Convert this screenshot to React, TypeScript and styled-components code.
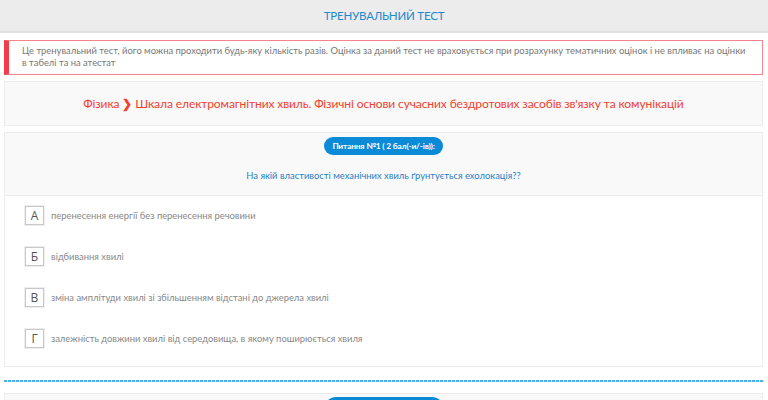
import React from "react";
import styled, { createGlobalStyle } from "styled-components";

const Global = createGlobalStyle`
  html, body { margin: 0; padding: 0; background: #fff; }
  body { font-family: Lato, "Open Sans", sans-serif; overflow: hidden; }
`;

const Header = styled.header`
  height: 31px;
  background: #ececec;
  border-bottom: 2px solid #e0e0e0;
  display: flex;
  align-items: center;
  justify-content: center;
  color: #1e8ad0;
  font-size: 11.5px;
  letter-spacing: -0.2px;
  text-transform: uppercase;
`;

const Main = styled.main`
  padding: 7px 4px 0 4px;
  display: flex;
  flex-direction: column;
`;

const Alert = styled.div`
  border: 1px solid #f4858c;
  border-left: 5px solid #f23b4b;
  padding: 4px 16px 5px 13px;
  color: #777;
  font-size: 9.4px;
  line-height: 12px;
  margin-right: 1px;
`;

const Panel = styled.section<{ $mt: number }>`
  margin-top: ${(p) => p.$mt}px;
  border: 1px solid #ececec;
  background: #f9f9f9;
  margin-right: 1px;
`;

const Topic = styled.div`
  height: 43px;
  display: flex;
  align-items: center;
  justify-content: center;
  color: #f2402f;
  font-size: 12px;
  letter-spacing: -0.1px;
`;

const Chevron = styled.span`
  font-weight: 900;
  margin: 0 3px;
`;

const QHead = styled.div`
  height: 63px;
  display: flex;
  flex-direction: column;
  align-items: center;
  padding-top: 4px;
  box-sizing: border-box;
  border-bottom: 1px solid #ececec;
`;

const Badge = styled.div`
  background: #0b8ad8;
  color: #fff;
  font-weight: 700;
  font-size: 8.4px;
  height: 18px;
  padding: 0 8px;
  border-radius: 9px;
  display: flex;
  align-items: center;
  letter-spacing: -0.2px;
`;

const Question = styled.div`
  margin-top: 15px;
  color: #2a7fc6;
  font-size: 9.4px;
`;

const Options = styled.div`
  background: #fff;
  padding: 10px 0 19px 20px;
  display: flex;
  flex-direction: column;
  gap: 23px;
`;

const Option = styled.div`
  display: flex;
  align-items: center;
  height: 18px;
`;

const Letter = styled.div`
  width: 17px;
  height: 17px;
  border: 1px solid #c8c8c8;
  box-shadow: 0 0 0 1px #eee;
  background: #fff;
  display: flex;
  align-items: center;
  justify-content: center;
  color: #555;
  font-size: 12px;
  font-family: "Open Sans", sans-serif;
`;

const OptText = styled.div`
  margin-left: 7px;
  color: #888;
  font-size: 9.4px;
`;

const Dots = styled.div`
  margin-top: 13px;
  height: 2px;
  background: repeating-linear-gradient(90deg, #4aaee8 0 3px, #c9e7f8 3px 4px);
`;

const Footer = styled.div`
  margin-top: 11px;
  border: 1px solid #ececec;
  background: #f9f9f9;
  height: 40px;
  display: flex;
  justify-content: center;
  padding-top: 3px;
  margin-right: 1px;
`;

const Button = styled.div`
  width: 120px;
  height: 24px;
  background: #0b8ad8;
  border-radius: 12px;
`;

const options = [
  ["А", "перенесення енергії без перенесення речовини"],
  ["Б", "відбивання хвилі"],
  ["В", "зміна амплітуди хвилі зі збільшенням відстані до джерела хвилі"],
  ["Г", "залежність довжини хвилі від середовища, в якому поширюється хвиля"],
];

export default function App() {
  return (
    <>
      <Global />
      <Header>Тренувальний тест</Header>
      <Main>
        <Alert>
          Це тренувальний тест, його можна проходити будь-яку кількість разів. Оцінка за даний тест не
          враховується при розрахунку тематичних оцінок і не впливає на оцінки в табелі та на атестат
        </Alert>
        <Panel $mt={6}>
          <Topic>
            Фізика<Chevron>❯</Chevron>Шкала електромагнітних хвиль. Фізичні основи сучасних бездротових засобів зв'язку та комунікацій
          </Topic>
        </Panel>
        <Panel $mt={6}>
          <QHead>
            <Badge>Питання №1 ( 2 бал(-и/-ів)):</Badge>
            <Question>На якій властивості механічних хвиль ґрунтується ехолокація??</Question>
          </QHead>
          <Options>
            {options.map(([l, t]) => (
              <Option key={l}>
                <Letter>{l}</Letter>
                <OptText>{t}</OptText>
              </Option>
            ))}
          </Options>
        </Panel>
        <Dots />
        <Footer>
          <Button />
        </Footer>
      </Main>
    </>
  );
}
